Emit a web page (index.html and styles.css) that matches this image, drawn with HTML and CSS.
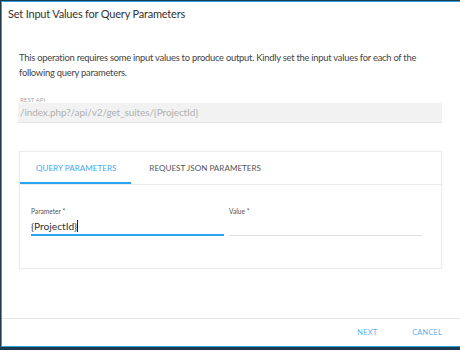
FILE: index.html
```html
<!DOCTYPE html>
<html>
<head>
<meta charset="utf-8">
<link rel="stylesheet" href="styles.css">
</head>
<body>
<div class="frame">
  <div class="dialog">
    <div class="title">Set Input Values for Query Parameters</div>
    <div class="content">
      <p class="intro">This operation requires some input values to produce output. Kindly set the input values for each of the following query parameters.</p>
      <div class="field-ro">
        <div class="ro-label">REST API</div>
        <div class="ro-input">/index.php?/api/v2/get_suites/{ProjectId}</div>
      </div>
      <div class="card">
        <div class="tabs">
          <div class="tab active">QUERY PARAMETERS</div>
          <div class="tab">REQUEST JSON PARAMETERS</div>
        </div>
        <div class="fields">
          <div class="field">
            <div class="flabel">Parameter *</div>
            <div class="finput focused">{ProjectId}<span class="caret"></span></div>
          </div>
          <div class="field">
            <div class="flabel">Value *</div>
            <div class="finput"></div>
          </div>
        </div>
      </div>
    </div>
    <div class="footer">
      <span class="btn">NEXT</span>
      <span class="btn">CANCEL</span>
    </div>
  </div>
</div>
</body>
</html>
```
FILE: styles.css
```css
html, body {
  margin: 0;
  padding: 0;
  background: #fff;
}
body {
  font-family: "Lato", "Open Sans", sans-serif;
  color: #333;
}
.frame {
  height: 350px;
  box-sizing: border-box;
  border-top: 1px solid #1d3b4d;
  border-left: 1px solid #1d3b4d;
  border-bottom: 3px solid #1d3b4d;
}
.dialog {
  height: 100%;
  box-sizing: border-box;
  border-top: 1px solid #2aa3e2;
  border-left: 1px solid #2aa3e2;
  border-bottom: 1px solid #2aa3e2;
  display: flex;
  flex-direction: column;
}
.title {
  font-size: 11px;
  letter-spacing: -0.2px;
  color: #333;
  padding: 5px 0 0 6px;
  height: 22px;
}
.content {
  flex: 1;
  padding: 0 18px 0 16px;
}
.intro {
  margin: 21px 0 0 1px;
  font-size: 9.4px;
  letter-spacing: -0.25px;
  line-height: 15px;
  color: #444;
}
.field-ro {
  margin-top: 16px;
}
.ro-label {
  font-size: 6px;
  color: #aaa;
  letter-spacing: 0.1px;
  padding-left: 2px;
  height: 7px;
}
.ro-input {
  background: #f2f2f2;
  height: 19px;
  line-height: 19px;
  font-size: 10px;
  letter-spacing: -0.1px;
  color: #b0b0b0;
  padding-left: 2px;
  border-bottom: 1px solid #e6e6e6;
}
.card {
  margin-top: 28px;
  margin-left: 1px;
  border: 1px solid #ececec;
  box-shadow: 0 0 1px rgba(0,0,0,0.08);
  height: 118px;
  box-sizing: border-box;
}
.tabs {
  display: flex;
  border-bottom: 1px solid #ececec;
  height: 33px;
  box-sizing: border-box;
}
.tab {
  font-size: 8.1px;
  color: #555;
  padding: 11px 16px 0 18px;
  white-space: nowrap;
}
.tab.active {
  color: #4aa9ef;
  border-bottom: 2px solid #2aa3f0;
  padding: 11px 15px 0 16px;
}
.fields {
  display: flex;
  gap: 5px;
  padding: 22px 19px 0 11px;
}
.field {
  flex: 1;
}
.flabel {
  font-size: 6.6px;
  color: #555;
  height: 9px;
}
.finput {
  height: 19px;
  line-height: 20px;
  font-size: 10.2px;
  color: #333;
  border-bottom: 1px solid #e0e0e0;
}
.finput.focused {
  height: 18px;
  border-bottom: 2px solid #2aa3f0;
}
.caret {
  display: inline-block;
  width: 1px;
  height: 12px;
  background: #222;
  vertical-align: -2px;
}
.footer {
  border-top: 1px solid #e6e6e6;
  height: 27px;
  display: flex;
  justify-content: flex-end;
  gap: 35px;
  padding-right: 18px;
}
.btn {
  font-size: 7.4px;
  color: #5bb1f0;
  line-height: 28px;
  letter-spacing: 0.2px;
}
```
